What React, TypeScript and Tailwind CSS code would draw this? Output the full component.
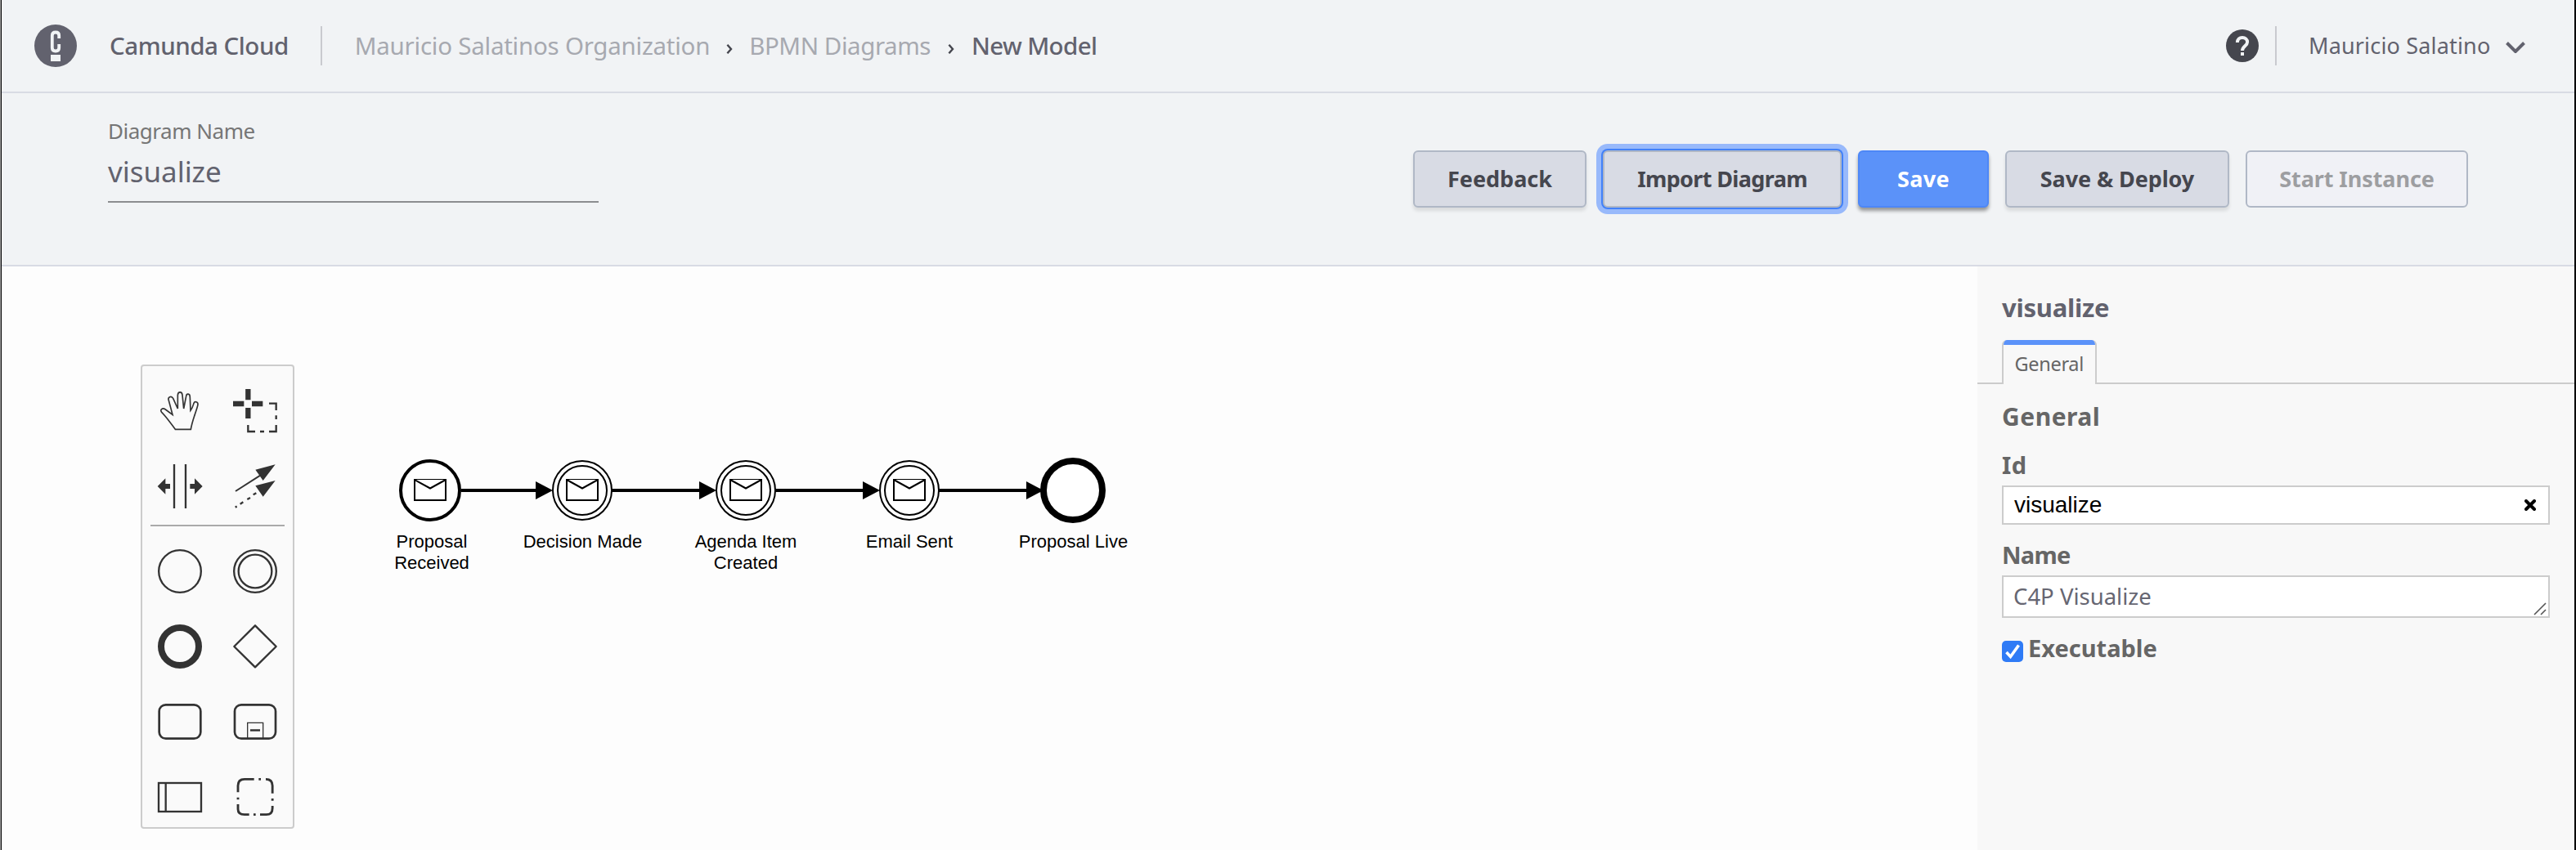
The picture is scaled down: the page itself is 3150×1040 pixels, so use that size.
import type { ReactNode } from "react";

const INK = "#333333";

function Logo() {
  return (
    <svg viewBox="0 0 52 52" className="size-[52px] shrink-0">
      <circle cx="26" cy="26" r="26" fill="#62626e" />
      <path
        d="M30.2 17V13.5Q30.2 9.5 26 9.5T21.8 13.5V28.5Q21.8 32.5 26 32.5T30.2 28.5V24"
        fill="none"
        stroke="#f1f3f5"
        strokeWidth="3.8"
      />
      <rect x="20" y="37" width="12" height="8" fill="#f1f3f5" />
    </svg>
  );
}

function Crumb() {
  return (
    <svg viewBox="0 0 8 12" className="mt-2 h-3 w-2 shrink-0">
      <path d="M1.4 0.8L6 6L1.4 11.2" fill="none" stroke="#45464e" strokeWidth="2.4" />
    </svg>
  );
}

function Header() {
  return (
    <header className="flex h-[114px] shrink-0 items-center border-b-2 border-[#d8dbe4] pr-[60px] pl-10 text-[29.5px] leading-10 whitespace-nowrap text-[#62626e]">
      <Logo />
      <span className="ml-10 font-medium tracking-[-0.47px]">Camunda Cloud</span>
      <span className="ml-[39px] h-12 w-0.5 bg-[#c9cacf]" />
      <nav className="flex items-center">
        <span className="ml-10 tracking-[-0.24px] text-[#a7a9b0]">Mauricio Salatinos Organization</span>
        <span className="ml-5"><Crumb /></span>
        <span className="ml-5 tracking-[-0.45px] text-[#a7a9b0]">BPMN Diagrams</span>
        <span className="ml-[21px]"><Crumb /></span>
        <span className="ml-[21px] font-medium tracking-[-0.63px]">New Model</span>
      </nav>
      <svg viewBox="0 0 40 40" className="ml-auto size-10">
        <circle cx="20" cy="20" r="20" fill="#45464e" />
        <path
          d="M13.9 16C13.9 12 16.6 9.9 20 9.9S26.1 12.2 26.1 15.6C26.1 20 20 20.8 20 26"
          fill="none"
          stroke="#f1f3f5"
          strokeWidth="4"
        />
        <rect x="18" y="28" width="4" height="4" fill="#f1f3f5" />
      </svg>
      <span className="ml-5 h-12 w-0.5 bg-[#c9cacf]" />
      <button className="ml-[39px] flex items-center text-[27px] tracking-[0.17px]">
        Mauricio Salatino
        <svg viewBox="0 0 24 14" className="mt-1 ml-[18.6px] h-3.5 w-6">
          <path d="M1.5 1.5L12 12L22.5 1.5" fill="none" stroke="#62626e" strokeWidth="4" />
        </svg>
      </button>
    </header>
  );
}

const base =
  "h-[70px] rounded-[6px] border-2 text-center text-[27px] font-bold whitespace-nowrap";
const grey = "border-[#b0b8c6] bg-[#d8dbe4] text-[#45464e]";

function Toolbar() {
  return (
    <section className="flex h-[212px] shrink-0 items-start justify-between border-b-2 border-[#d8dbe4] pr-[130px] pl-[130px]">
      <div className="w-[600px] border-b-2 border-[#8c8d90] pt-[30px] pb-4">
        <div className="text-[26px] leading-8 tracking-[-0.48px] text-[#767676]">Diagram Name</div>
        <div className="mt-3.5 text-[35px] leading-10 tracking-[-0.04px] text-[#62626e]">visualize</div>
      </div>
      <div className="flex gap-5 pt-[70px]">
        <button className={`${base} ${grey} w-[212px] shadow-[0_4px_4px_rgba(0,0,0,0.1)]`}>Feedback</button>
        <button
          className={`${base} ${grey} w-[292px] tracking-[-0.64px] shadow-[0_0_0_2px_#4281f8,0_0_0_8px_#98b9fb]`}
        >
          Import Diagram
        </button>
        <button
          className={`${base} w-[160px] border-[#4d87f7] bg-[#5b92f9] tracking-[0.4px] text-white shadow-[0_4px_4px_rgba(0,0,0,0.38)]`}
        >
          Save
        </button>
        <button className={`${base} ${grey} w-[274px] tracking-[-0.1px] shadow-[0_4px_4px_rgba(0,0,0,0.1)]`}>
          Save &amp; Deploy
        </button>
        <button className={`${base} w-[272px] border-[#b0b8c6] bg-[#f0f1f6] tracking-[-0.08px] text-[#9d9ea1]`}>
          Start Instance
        </button>
      </div>
    </section>
  );
}

function Tool({ box, children }: { box: string; children: ReactNode }) {
  return (
    <svg viewBox={box} className="size-[92px]" fill="none" stroke={INK} strokeWidth="7">
      {children}
    </svg>
  );
}

function Palette() {
  return (
    <div className="h-[568px] w-[188px] shrink-0 overflow-hidden rounded-[4px] border-2 border-[#cccccc] bg-[#fafafa] pt-[9px]">
      <div className="grid grid-cols-2">
        <Tool box="42 81 276 276">
          <path
            d="M163 286L220 286C224 262 232 240 237 225C242 210 246 198 246 194C246 184 234 182 231 190C228 200 226 208 219 217L217 168C217 152 204 154 203 164L194 210L189 160C188 146 173 146 172 160L172 210L155 172C148 160 134 168 139 180L153 232L127 213C116 205 105 214 113 223C130 240 145 262 163 286Z"
            strokeWidth="5"
          />
        </Tool>
        <Tool box="318 81 276 276">
          <path d="M430 138V178M430 207V246M375 192H415M444 192H484" strokeWidth="19" />
          <path d="M507 191H533V216M533 235V249M533 270V294H507M489 294H474M456 294H430V270" />
        </Tool>
        <Tool box="42 357 276 276">
          <path d="M159 414V576M201 414V576" />
          <path d="M98 495L127 466V486H144V504H127V524ZM263 495L234 466V486H217V504H234V524Z" fill={INK} stroke="none" />
        </Tool>
        <Tool box="318 357 276 276">
          <path d="M384 513L476 454" strokeWidth="6" />
          <path d="M530 415L457 434L485 474ZM530 474L457 493L485 533Z" fill={INK} stroke="none" />
          <path d="M383 572L389 569M401 560L412 553M427 543L438 537M449 526L460 520" />
        </Tool>
      </div>
      <div className="mx-2.5 mt-px mb-[9px] h-0.5 bg-[#aaaaaa]" />
      <div className="grid grid-cols-2">
        <Tool box="42 669 276 276">
          <circle cx="180" cy="807" r="77.5" />
        </Tool>
        <Tool box="318 669 276 276">
          <circle cx="456" cy="807" r="77.5" />
          <circle cx="456" cy="807" r="61" />
        </Tool>
        <Tool box="42 45 276 276">
          <circle cx="180" cy="183" r="69" strokeWidth="24" />
        </Tool>
        <Tool box="318 45 276 276">
          <path d="M456 106L533 183L456 259L379 183Z" strokeLinejoin="round" />
        </Tool>
        <Tool box="42 321 276 276">
          <rect x="104" y="397" width="152" height="124" rx="24" strokeWidth="8" />
        </Tool>
        <Tool box="318 321 276 276">
          <rect x="381" y="397" width="150" height="124" rx="24" strokeWidth="8" />
          <path d="M428 520V463H485V520" strokeWidth="4" />
          <path d="M438 490.500H474" strokeWidth="8" />
        </Tool>
        <Tool box="42 597 276 276">
          <rect x="102" y="684" width="156" height="105" />
          <path d="M128 684V789" />
        </Tool>
        <Tool box="318 597 276 276">
          <path
            d="M393 718V694Q393 670 417 670H452M469 670H477M495 670Q519.500 670 519.500 694V722M519.500 741V749M519.500 768V776Q519.500 800 497 800H474M458 800H450M434 800H417Q393 800 393 780V762M393 745V737"
            strokeWidth="8.500"
          />
        </Tool>
      </div>
    </div>
  );
}

function Envelope({ cx }: { cx: number }) {
  return (
    <g fill="white" stroke="black" strokeWidth="2">
      <rect x={cx - 19} y="587" width="38" height="25" />
      <path d={`M${cx - 19} 587L${cx} 597.500L${cx + 19} 587`} />
    </g>
  );
}

const flows = [
  [564, 676],
  [748, 876],
  [948, 1076],
  [1148, 1276],
];

const labels: [number, string[]][] = [
  [528, ["Proposal", "Received"]],
  [712.5, ["Decision Made"]],
  [912, ["Agenda Item", "Created"]],
  [1112, ["Email Sent"]],
  [1312.5, ["Proposal Live"]],
];

function Diagram() {
  return (
    <svg viewBox="360 446 1100 568" className="h-[568px] w-[1100px] shrink-0">
      <circle cx="526" cy="600" r="36" fill="white" stroke="black" strokeWidth="4" />
      <Envelope cx={526} />
      {[712, 912, 1112].map((cx) => (
        <g key={cx}>
          <circle cx={cx} cy="600" r="36" fill="white" stroke="black" strokeWidth="2" />
          <circle cx={cx} cy="600" r="30" fill="white" stroke="black" strokeWidth="2" />
          <Envelope cx={cx} />
        </g>
      ))}
      <circle cx="1312" cy="600" r="36" fill="white" stroke="black" strokeWidth="8" />
      {flows.map(([a, b]) => (
        <g key={a}>
          <path d={`M${a} 600H${b - 8}`} stroke="black" strokeWidth="4" />
          <path d={`M${b} 600L${b - 21} 589V611Z`} />
        </g>
      ))}
      {labels.map(([x, lines]) =>
        lines.map((line, i) => (
          <text
            key={line}
            x={x}
            y={669.5 + i * 26.4}
            textAnchor="middle"
            className="font-['Liberation_Sans',Arial,sans-serif] text-[22px]"
          >
            {line}
          </text>
        )),
      )}
    </svg>
  );
}

function Properties() {
  return (
    <aside className="w-[730px] shrink-0 bg-[#f8f8f8] pt-[30px] text-[29px] leading-8 font-bold text-[#666666]">
      <h2 className="pl-[30px] text-[31px] leading-10 tracking-[-0.26px] text-[#62626e]">visualize</h2>
      <div className="mt-5 flex h-[54px]">
        <div className="w-[30px] border-b-2 border-[#cccccc]" />
        <div className="w-[116px] overflow-hidden rounded-t-[6px] border-x-2 border-[#cccccc]">
          <div className="h-1.5 bg-[#5b92f9]" />
          <div className="pt-[11px] pl-[13.5px] text-[23.5px] leading-6 font-normal tracking-[-0.3px]">General</div>
        </div>
        <div className="flex-1 border-b-2 border-[#cccccc]" />
      </div>
      <div className="pr-[30px] pl-[30px]">
        <h3 className="mt-5 text-[30px] leading-10 tracking-[0.5px]">General</h3>
        <div className="mt-[23px] tracking-[0.5px]">Id</div>
        <div className="mt-[9px] flex h-12 items-center justify-between border-2 border-[#cccccc] bg-white pr-[15px] pl-[13px] font-['Liberation_Sans',Arial,sans-serif] text-[28px] font-normal text-black">
          visualize
          <svg viewBox="0 0 14 14" className="size-3.5">
            <path d="M2 2L12 12M12 2L2 12" stroke="black" strokeWidth="4" strokeLinecap="round" />
          </svg>
        </div>
        <div className="mt-[21px] tracking-[-0.74px]">Name</div>
        <div className="mt-[9px] flex h-[52px] items-center justify-between border-2 border-[#cccccc] bg-white pl-3 text-[27.5px] font-normal text-[#666672]">
          C4P Visualize
          <svg viewBox="0 0 16 16" className="mr-0.5 mb-px size-4 self-end">
            <path d="M1 15L15 1M9 15L15 9" stroke="#555555" strokeWidth="1.600" />
          </svg>
        </div>
        <label className="mt-[21px] flex gap-1.5">
          <svg viewBox="0 0 26 26" className="mt-[7px] size-[26px]">
            <rect width="26" height="26" rx="5" fill="#2f7bf6" />
            <path d="M5.500 14L10.500 19.500L20.500 5.500" fill="none" stroke="white" strokeWidth="3.600" />
          </svg>
          Executable
        </label>
      </div>
    </aside>
  );
}

export default function App() {
  return (
    <div className="flex h-[1040px] w-[3150px] overflow-hidden border-l border-[#a3a3a3] bg-[#f1f3f5] font-['Noto_Sans',sans-serif]">
      <div className="flex flex-1 flex-col border-r-2 border-l border-r-black border-l-black">
        <Header />
        <Toolbar />
        <main className="flex min-h-0 flex-1 bg-[#fdfdfd]">
          <div className="flex flex-1 pt-[120px] pl-[170px]">
            <Palette />
            <Diagram />
          </div>
          <Properties />
        </main>
      </div>
    </div>
  );
}
